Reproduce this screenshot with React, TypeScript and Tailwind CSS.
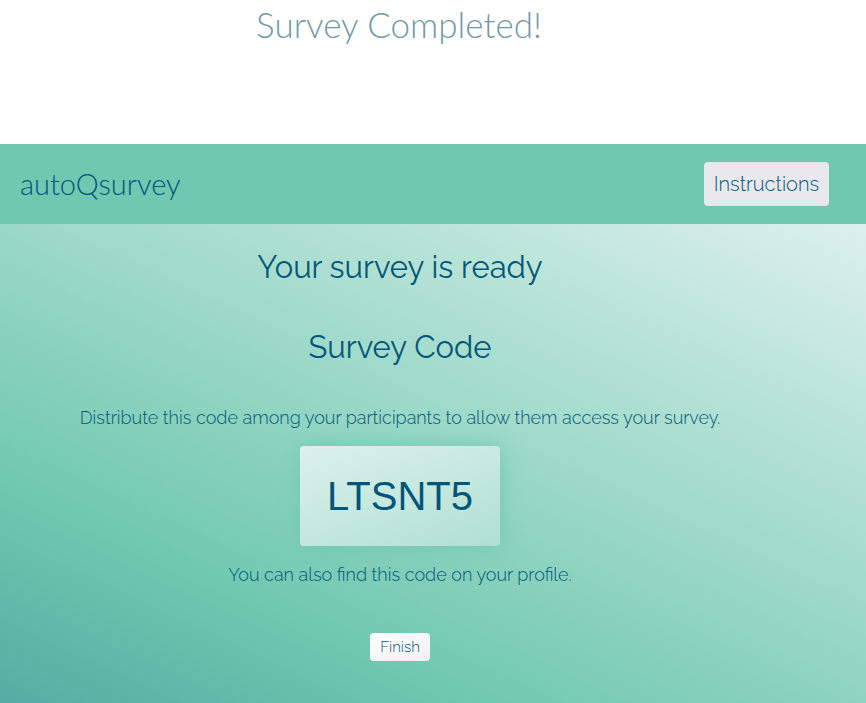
export default function App() {
  return (
    <div className="flex min-h-screen flex-col bg-white font-['Raleway','Lato',sans-serif] text-[#00567a]">
      <h1 className="h-36 pt-1 pr-[68px] text-center font-['Lato',sans-serif] text-[35px] leading-10 font-light text-[#7398a7]">
        Survey Completed!
      </h1>
      <header className="flex h-20 items-center justify-between bg-[#70c8b0] pr-[37px] pl-5">
        <span className="font-['Lato',sans-serif] text-[29px] leading-9 font-light">autoQsurvey</span>
        <button className="h-11 rounded bg-[#e9e9ed] px-[10px] text-[20px] font-light">Instructions</button>
      </header>
      <main className="flex grow flex-col items-center bg-[linear-gradient(25deg,#56aca3_0%,#70c8b0_25%,#dcf1eb_100%)] pt-6 pr-[66px] pb-10 text-center">
        <h2 className="text-[31px] leading-[38px] font-normal">Your survey is ready</h2>
        <h2 className="mt-[42px] text-[31px] leading-[38px] font-normal">Survey Code</h2>
        <p className="mt-[37px] text-[18px] leading-[30px] font-light">
          Distribute this code among your participants to allow them access your survey.
        </p>
        <output className="mt-[13px] flex h-[100px] w-[200px] items-center justify-center rounded bg-[linear-gradient(160deg,#dcf1eb,#b0e0d3)] font-['Liberation_Sans',Arial,sans-serif] text-[40px] shadow-[0_0_20px_#70c8b0]">
          LTSNT5
        </output>
        <p className="mt-[14px] text-[18px] leading-[30px] font-light">You can also find this code on your profile.</p>
        <button className="mt-[43px] h-7 rounded bg-[linear-gradient(160deg,#ffffff,#f0f0f0)] px-[10px] text-[15px] font-light">
          Finish
        </button>
      </main>
    </div>
  );
}
